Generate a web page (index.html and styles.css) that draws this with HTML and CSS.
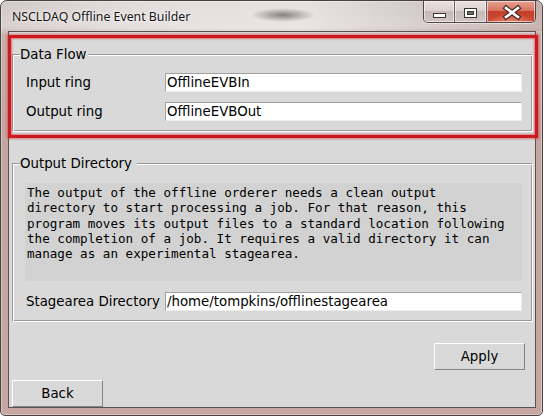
FILE: index.html
```html
<!DOCTYPE html>
<html>
<head>
<meta charset="utf-8">
<link rel="stylesheet" href="styles.css">
</head>
<body>
<div class="window">
  <div class="titlebar">
    <span class="title">NSCLDAQ Offline Event Builder</span>
    <div class="controls">
      <span class="ctl ctl-min">
        <svg width="30" height="21" viewBox="0 0 30 21"><rect x="9.5" y="12.5" width="12" height="4" fill="#fff" stroke="#3a3535" stroke-width="1"/></svg>
      </span>
      <span class="ctl ctl-max">
        <svg width="32" height="21" viewBox="0 0 32 21"><rect x="9.5" y="7.5" width="12" height="9" fill="#fff" stroke="#3a3535" stroke-width="1"/><rect x="12.5" y="10.5" width="6" height="3" fill="#6f6a6a" stroke="#3a3535" stroke-width="1"/></svg>
      </span>
      <span class="ctl ctl-close">
        <svg width="50" height="21" viewBox="0 0 50 21"><path d="M19 7 L31 16 M31 7 L19 16" stroke="#4a2a25" stroke-width="5" stroke-linecap="square"/><path d="M19 7 L31 16 M31 7 L19 16" stroke="#fff" stroke-width="2.6" stroke-linecap="square"/></svg>
      </span>
    </div>
  </div>
  <div class="client">
    <fieldset class="group group-data">
      <legend class="group-title">Data Flow</legend>
      <div class="row"><span class="label">Input ring</span><span class="entry">OfflineEVBIn</span></div>
      <div class="row"><span class="label">Output ring</span><span class="entry">OfflineEVBOut</span></div>
    </fieldset>
    <fieldset class="group group-out">
      <legend class="group-title group-title-out">Output Directory</legend>
      <p class="msg">The output of the offline orderer needs a clean output
directory to start processing a job. For that reason, this
program moves its output files to a standard location following
the completion of a job. It requires a valid directory it can
manage as an experimental stagearea.</p>
      <div class="row"><span class="label">Stagearea Directory</span><span class="entry">/home/tompkins/offlinestagearea</span></div>
    </fieldset>
    <div class="apply-row"><button class="btn">Apply</button></div>
    <div class="back-row"><button class="btn">Back</button></div>
  </div>
  <div class="highlight"></div>
</div>
</body>
</html>
```
FILE: styles.css
```css
html, body {
  margin: 0;
  padding: 0;
  background: #ffffff;
}
body {
  font-family: "DejaVu Sans", sans-serif;
  font-size: 13.33px;
  color: #000;
}
.window {
  position: relative;
  width: 543px;
  height: 416px;
  box-sizing: border-box;
  border: 1px solid #4a4242;
  border-radius: 7px 7px 5px 5px;
  background: linear-gradient(to bottom, #d2cac8 0, #d9d1cf 26px, #c9b1ac 34px, #c3a6a1 120px, #c6a7a2 100%);
  box-shadow: inset 0 0 0 1px rgba(255,255,255,0.35);
  display: flex;
  flex-direction: column;
  overflow: hidden;
}
.titlebar {
  height: 30px;
  flex: none;
  display: flex;
  align-items: flex-start;
  background:
    radial-gradient(ellipse 32px 7px at 282px 14px, rgba(70,60,60,0.6), rgba(70,60,60,0) 100%),
    linear-gradient(to right, rgba(255,255,255,0) 0, rgba(255,255,255,0.35) 130px, rgba(255,255,255,0.45) 300px, rgba(255,255,255,0) 420px, rgba(150,90,85,0.25) 541px);
  border-radius: 6px 6px 0 0;
}
.title {
  margin: 8px 0 0 11px;
  font-family: "Noto Sans", "Open Sans", sans-serif;
  font-size: 12.3px;
  line-height: 16px;
  color: #141414;
  text-shadow: 0 0 5px rgba(255,255,255,0.9), 0 0 2px rgba(255,255,255,0.8);
}
.controls {
  margin-left: auto;
  margin-right: 6px;
  margin-top: 0;
  display: flex;
  height: 21px;
  border: 1px solid #524646;
  border-top: none;
  border-radius: 0 0 5px 5px;
  overflow: hidden;
  box-shadow: 0 1px 0 rgba(255,255,255,0.5);
}
.ctl {
  display: block;
  height: 21px;
  box-shadow: inset 0 0 0 1px rgba(255,255,255,0.55);
}
.ctl svg { display: block; }
.ctl-min, .ctl-max {
  background: linear-gradient(to bottom, #e8e0df 0, #dcd2d1 45%, #c6b9b7 50%, #d0c5c3 100%);
}
.ctl-min { width: 30px; border-right: 1px solid #6c6060; }
.ctl-max { width: 31px; border-right: 1px solid #6c6060; }
.ctl-close {
  width: 48px;
  background:
    radial-gradient(ellipse 22px 8px at 24px 21px, rgba(255,170,140,0.7), rgba(255,170,140,0) 100%),
    linear-gradient(to bottom, #e6a294 0, #d7735f 45%, #c2402c 50%, #cc4d36 100%);
}
.client {
  flex: 1;
  margin: 0 6px 7px 7px;
  border: 1px solid #5a5151;
  background: #d9d9d9;
  display: flex;
  flex-direction: column;
  min-height: 0;
}
.group {
  margin: 15px 2px 0 3px;
  padding: 11px 10px 10px 12px;
  border: 1px solid;
  border-color: #9a9a9a #ffffff #ffffff #9a9a9a;
  box-shadow: inset 1px 1px 0 #ffffff, inset -1px -1px 0 #9a9a9a;
  min-width: 0;
}
.group-out {
  margin-top: 24px;
  padding-top: 12px;
}
.group-title {
  padding: 0 1px 0 0;
  margin-left: -5px;
  line-height: 15px;
  background: #d9d9d9;
  font-size: 13.33px;
}
.group-title-out {
  padding-right: 5px;
}
.row {
  display: flex;
  align-items: center;
  height: 19px;
}
.row + .row {
  margin-top: 10px;
}
.label {
  width: 140px;
  flex: none;
  box-sizing: border-box;
  padding-left: 1px;
  white-space: nowrap;
  line-height: 19px;
}
.entry {
  flex: 1;
  height: 19px;
  box-sizing: border-box;
  background: #ffffff;
  border: 1px solid;
  border-color: #a0a0a0 #ededed #ededed #a0a0a0;
  padding: 1px 1px 0 1px;
  line-height: 16px;
  white-space: nowrap;
  overflow: hidden;
}
.msg {
  margin: 0 0 11px 0;
  height: 98px;
  box-sizing: border-box;
  background: #d2d2d2;
  padding: 2px 2px;
  font-family: "DejaVu Sans Mono", monospace;
  font-size: 12.6px;
  line-height: 15.3px;
  white-space: pre;
  overflow: hidden;
}
.apply-row {
  margin-top: 21px;
  display: flex;
  justify-content: flex-end;
  padding-right: 10px;
}
.back-row {
  margin-top: auto;
  display: flex;
  padding-left: 3px;
}
.btn {
  width: 91px;
  height: 27px;
  margin: 0;
  padding: 0;
  box-sizing: border-box;
  background: #d9d9d9;
  border: 1px solid;
  border-color: #ffffff #858585 #858585 #ffffff;
  font-family: "DejaVu Sans", sans-serif;
  font-size: 13.33px;
  color: #000;
}
.highlight {
  position: absolute;
  left: 7px;
  top: 34px;
  width: 530px;
  height: 103px;
  box-sizing: border-box;
  border: 3px solid #cc1a20;
  box-shadow: 0 0 2px 1px rgba(210,40,45,0.55), inset 0 0 2px 1px rgba(210,40,45,0.55);
}
```
